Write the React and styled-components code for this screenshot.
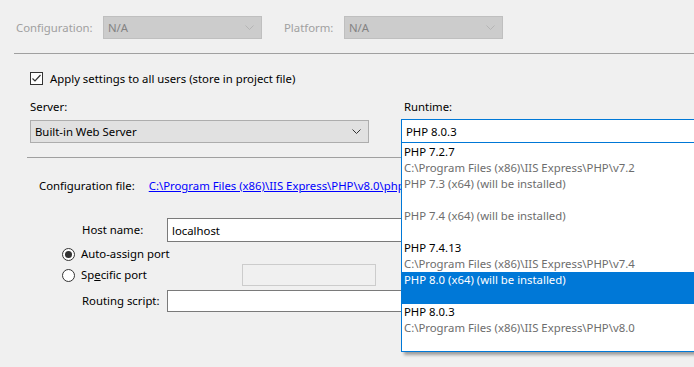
import styled, { createGlobalStyle } from "styled-components";

const FONT = `"Noto Sans", "Open Sans", sans-serif`;

const Global = createGlobalStyle`
	html, body {
		margin: 0;
		padding: 0;
		background: #f0f0f0;
		overflow: hidden;
	}
	body {
		font-family: ${FONT};
		font-size: 11.35px;
		color: #000;
	}
	* {
		box-sizing: border-box;
	}
`;

const Page = styled.div`
	width: 694px;
	height: 367px;
	overflow: hidden;
	position: relative;
`;

const TopBar = styled.div`
	display: flex;
	align-items: center;
	height: 23px;
	margin-top: 16px;
	padding-left: 16px;
`;

const DimLabel = styled.span`
	color: #a0a0a0;
	width: ${p => p.w}px;
	margin-left: ${p => p.ml || 0}px;
	line-height: 16px;
`;

const Combo = styled.div`
	display: flex;
	align-items: center;
	justify-content: space-between;
	width: ${p => p.w}px;
	height: ${p => p.h || 23}px;
	padding: 0 7px 0 4px;
	background: ${p => p.disabled ? "#cccccc" : "#e1e1e1"};
	border: 1px solid ${p => p.disabled ? "#bfbfbf" : "#adadad"};
	color: ${p => p.disabled ? "#838383" : "#000"};
	flex: none;
`;

const Chevron = ({ color }) => (
	<svg width="9" height="5" viewBox="0 0 9 5">
		<polyline points="0.5,0.5 4.5,4.5 8.5,0.5" fill="none" stroke={color} strokeWidth="1" />
	</svg>
);

const Divider = styled.div`
	margin-left: ${p => p.ml}px;
	margin-top: ${p => p.mt}px;
	border-top: 1px solid #a0a0a0;
`;

const CheckRow = styled.label`
	display: flex;
	align-items: center;
	gap: 7px;
	margin: 17px 0 0 30px;
	height: 14px;
`;

const CheckBox = styled.span`
	width: 13px;
	height: 13px;
	border: 1px solid #333333;
	background: #fff;
	display: flex;
	align-items: center;
	justify-content: center;
`;

const Columns = styled.div`
	display: flex;
	margin: 14px 0 0 30px;
`;

const Column = styled.div`
	display: flex;
	flex-direction: column;
	width: ${p => p.w}px;
	margin-left: ${p => p.ml || 0}px;
	flex: none;
	position: relative;
`;

const FieldLabel = styled.div`
	line-height: 16px;
	margin-left: ${p => p.ml || 0}px;
	margin-bottom: ${p => p.mb}px;
`;

const OpenCombo = styled.div`
	display: flex;
	align-items: center;
	height: 24px;
	padding-left: 4px;
	background: #fff;
	border: 1px solid #0078d7;
`;

const DropList = styled.div`
	position: absolute;
	top: 100%;
	left: 0;
	width: 340px;
	height: 209px;
	background: #fff;
	border: 1px solid #0078d7;
	border-top: none;
	box-shadow: 3px 3px 3px rgba(0, 0, 0, 0.35);
	padding-top: 1px;
	z-index: 5;
`;

const Option = styled.div`
	height: 32px;
	padding-left: 2px;
	background: ${p => p.selected ? "#0078d7" : "transparent"};
	color: ${p => p.selected ? "#fff" : "#000"};
`;

const OptLine = styled.div`
	line-height: 16px;
	white-space: nowrap;
	color: ${p => p.dim ? "#6d6d6d" : "inherit"};
`;

const InfoRow = styled.div`
	display: flex;
	align-items: center;
	margin: 20px 0 0 39px;
	line-height: 16px;
	white-space: nowrap;
`;

const Link = styled.a`
	color: #0000ff;
	text-decoration: underline;
	margin-left: 14px;
`;

const FormRow = styled.div`
	display: flex;
	align-items: center;
	margin: ${p => p.mt}px 0 0 ${p => p.ml}px;
	height: ${p => p.h}px;
`;

const RowLabel = styled.span`
	width: 85px;
	flex: none;
	line-height: 16px;
`;

const TextBox = styled.div`
	width: ${p => p.w}px;
	height: ${p => p.h}px;
	flex: none;
	display: flex;
	align-items: center;
	padding-left: 4px;
	background: ${p => p.disabled ? "#f0f0f0" : "#fff"};
	border: 1px solid ${p => p.disabled ? "#cccccc" : "#7a7a7a"};
	margin-left: ${p => p.ml || 0}px;
`;

const Radio = styled.span`
	width: 13px;
	height: 13px;
	border-radius: 50%;
	border: 1px solid #333333;
	background: #fff;
	display: flex;
	align-items: center;
	justify-content: center;
	flex: none;
	&::after {
		content: "";
		width: 7px;
		height: 7px;
		border-radius: 50%;
		background: ${p => p.checked ? "#333333" : "transparent"};
	}
`;

const RadioText = styled.span`
	margin-left: 6px;
	width: ${p => p.w || "auto"};
	line-height: 16px;
	flex: none;
`;

const runtimes = [
	{ name: "PHP 7.2.7", path: "C:\\Program Files (x86)\\IIS Express\\PHP\\v7.2" },
	{ name: "PHP 7.3 (x64) (will be installed)", dim: true },
	{ name: "PHP 7.4 (x64) (will be installed)", dim: true },
	{ name: "PHP 7.4.13", path: "C:\\Program Files (x86)\\IIS Express\\PHP\\v7.4" },
	{ name: "PHP 8.0 (x64) (will be installed)", selected: true },
	{ name: "PHP 8.0.3", path: "C:\\Program Files (x86)\\IIS Express\\PHP\\v8.0" },
];

const App = () => (
	<Page>
		<Global />
		<TopBar>
			<DimLabel w={87}>Configuration:</DimLabel>
			<Combo disabled w={159}>
				N/A
				<Chevron color="#b5b5b5" />
			</Combo>
			<DimLabel w={60} ml={22}>Platform:</DimLabel>
			<Combo disabled w={159}>
				N/A
				<Chevron color="#b5b5b5" />
			</Combo>
		</TopBar>
		<Divider ml={14} mt={14} />

		<CheckRow>
			<CheckBox>
				<svg width="11" height="11" viewBox="0 0 11 11">
					<polyline points="1.5,5.5 4,8 9.5,2" fill="none" stroke="#333" strokeWidth="1.2" />
				</svg>
			</CheckBox>
			Apply settings to all users (store in project file)
		</CheckRow>

		<Columns>
			<Column w={339}>
				<FieldLabel mb={5}>Server:</FieldLabel>
				<Combo w={339}>
					Built-in Web Server
					<Chevron color="#333" />
				</Combo>
			</Column>
			<Column w={340} ml={32}>
				<FieldLabel mb={4} ml={3}>Runtime:</FieldLabel>
				<div style={{ position: "relative" }}>
					<OpenCombo>PHP 8.0.3</OpenCombo>
					<DropList>
						{runtimes.map(r => (
							<Option key={r.name} selected={r.selected}>
								<OptLine dim={r.dim}>{r.name}</OptLine>
								{r.path && <OptLine dim>{r.path}</OptLine>}
							</Option>
						))}
					</DropList>
				</div>
			</Column>
		</Columns>

		<Divider ml={27} mt={14} />

		<InfoRow>
			Configuration file:
			<Link>C:\Program Files (x86)\IIS Express\PHP\v8.0\php.ini</Link>
		</InfoRow>

		<FormRow ml={82} mt={24} h={24}>
			<RowLabel>Host name:</RowLabel>
			<TextBox w={480} h={24}>localhost</TextBox>
		</FormRow>
		<FormRow ml={62} mt={4} h={16}>
			<Radio checked />
			<RadioText>Auto-assi<u>g</u>n port</RadioText>
		</FormRow>
		<FormRow ml={62} mt={2} h={22}>
			<Radio />
			<RadioText w="161px">Sp<u>e</u>cific port</RadioText>
			<TextBox disabled w={134} h={22} />
		</FormRow>
		<FormRow ml={82} mt={4} h={22}>
			<RowLabel>Routing script:</RowLabel>
			<TextBox w={480} h={22} />
		</FormRow>
	</Page>
);

export default App;
